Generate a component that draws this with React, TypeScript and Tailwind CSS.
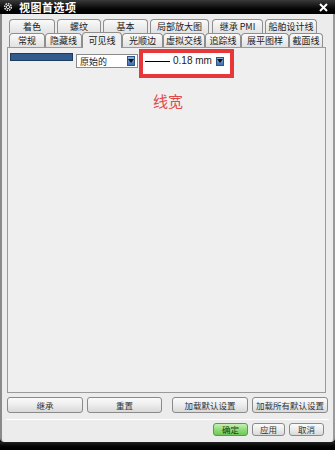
import React from "react";

const font = { fontFamily: '"Noto Sans CJK SC", "Liberation Sans", sans-serif' };

const row1 = [
  { t: "着色", w: 46 },
  { t: "螺纹", w: 44 },
  { t: "基本", w: 45 },
  { t: "局部放大图", w: 59 },
  { t: "继承 PMI", w: 51 },
  { t: "船舶设计线", w: 52 },
];
const row1Gaps = [0, 2, 2, 2, 3, 2];

const row2 = [
  { t: "常规", w: 36 },
  { t: "隐藏线", w: 37 },
  { t: "可见线", w: 40, sel: true },
  { t: "光顺边", w: 41 },
  { t: "虚拟交线", w: 42 },
  { t: "追踪线", w: 36 },
  { t: "展平图样", w: 48 },
  { t: "截面线", w: 34 },
];

function Btn({ children, w, h = 16, green = false }: { children: React.ReactNode; w: number; h?: number; green?: boolean }) {
  return (
    <div
      className={
        "flex items-center justify-center whitespace-nowrap rounded-[3px] border text-[8.5px] leading-none " +
        (green
          ? "border-[#5a9a4a] bg-gradient-to-b from-[#c8f0b8] via-[#8fdc78] to-[#6fc85a] text-[#1a3a10]"
          : "border-[#8a8a8a] bg-gradient-to-b from-[#fbfbfb] via-[#ececec] to-[#d9d9d9] text-[#333]")
      }
      style={{ width: w, height: h }}
    >
      {children}
    </div>
  );
}

export default function App() {
  return (
    <div className="w-[335px] h-[450px] flex flex-col bg-black overflow-hidden" style={font}>
      {/* Title bar */}
      <div className="h-[14px] flex items-center bg-gradient-to-b from-[#3a3a3a] via-[#111] to-[#000] px-[3px]">
        <svg width="10" height="10" viewBox="0 0 10 10" className="mr-[6px]">
          <circle cx="5" cy="5" r="3.3" fill="none" stroke="#ddd" strokeWidth="1.6" strokeDasharray="1.6 0.9" />
          <circle cx="5" cy="5" r="1.6" fill="none" stroke="#ddd" strokeWidth="1" />
        </svg>
        <span className="text-[11px] font-bold text-white leading-none tracking-[0.5px]">视图首选项</span>
        <div className="flex-1" />
        <svg width="9" height="9" viewBox="0 0 9 9" className="mr-[4px]">
          <path d="M1 1 L8 8 M8 1 L1 8" stroke="#fff" strokeWidth="2" />
        </svg>
      </div>

      {/* Body */}
      <div className="flex-1 flex flex-col bg-[#ececec] border-l-[2px] border-l-[#8a8a8a] border-r-[2px] border-r-[#9a9a9a] rounded-b-[4px]">
        {/* Tabs */}
        <div className="pt-[5px] pl-[7px] flex flex-col">
          <div className="flex h-[14px]">
            {row1.map((tab, i) => (
              <div
                key={tab.t}
                className="flex items-center justify-center whitespace-nowrap border border-b-0 border-[#8e8e8e] rounded-t-[4px] bg-gradient-to-b from-[#fafafa] to-[#e2e2e2] text-[9px] text-[#222] leading-none"
                style={{ width: tab.w, marginLeft: row1Gaps[i] }}
              >
                {tab.t}
              </div>
            ))}
          </div>
          <div className="flex h-[14px] items-end relative z-10">
            {row2.map((tab) => (
              <div
                key={tab.t}
                className={
                  "flex items-center justify-center whitespace-nowrap border border-[#8e8e8e] rounded-t-[4px] text-[9px] text-[#222] leading-none " +
                  (tab.sel
                    ? "h-[16px] border-b-0 bg-[#efefef] -mb-[1px]"
                    : "h-[14px] border-b-0 bg-gradient-to-b from-[#fafafa] to-[#e2e2e2]")
                }
                style={{ width: tab.w }}
              >
                {tab.t}
              </div>
            ))}
          </div>
        </div>

        {/* Panel */}
        <div className="ml-[5px] mr-[7px] h-[346px] border border-[#9a9a9a] bg-[#efefef] relative">
          <div className="flex items-start pt-[5px] pl-[2px]">
            <div className="w-[63px] h-[8px] bg-[#2f5b8e] border border-[#1e3a5c]" />
            <div className="ml-[3px] mt-[1px] w-[62px] h-[14px] bg-white border border-[#8a8a8a] flex items-center">
              <span className="text-[9px] text-[#222] leading-none pl-[3px] flex-1">原始的</span>
              <div className="w-[8px] h-[10px] mr-[2px] bg-gradient-to-b from-[#8fb3e0] to-[#3d6fb0] border border-[#2d558a] flex items-center justify-center">
                <svg width="6" height="4" viewBox="0 0 6 4"><path d="M0 0 L6 0 L3 4 Z" fill="#111" /></svg>
              </div>
            </div>
            <div className="ml-[1px] -mt-[4px] w-[95px] h-[29px] border-[4px] border-[#e8373a] bg-white flex flex-col">
              <div className="flex items-center h-[16px] pl-[2px]">
                <div className="w-[25px] h-[1px] bg-black" />
                <span className="text-[10px] text-[#222] leading-none ml-[3px]" style={{ fontFamily: '"Liberation Sans", sans-serif' }}>
                  0.18 mm
                </span>
                <div className="ml-[4px] w-[8px] h-[9px] bg-gradient-to-b from-[#8fb3e0] to-[#3d6fb0] border border-[#2d558a] flex items-center justify-center">
                  <svg width="6" height="4" viewBox="0 0 6 4"><path d="M0 0 L6 0 L3 4 Z" fill="#111" /></svg>
                </div>
              </div>
            </div>
          </div>
          <div className="pl-[145px] pt-[15px] text-[15px] text-[#e04a4a] leading-none">线宽</div>
        </div>

        {/* Button row */}
        <div className="flex pl-[5px] pt-[4px] gap-[4px]">
          <Btn w={76}>继承</Btn>
          <Btn w={75}>重置</Btn>
          <div className="w-[2px]" />
          <Btn w={76}>加载默认设置</Btn>
          <Btn w={76}>加载所有默认设置</Btn>
        </div>

        <div className="mt-[6px] mx-[4px] h-[1px] bg-[#d4d4d4] border-b border-b-white" />

        <div className="flex justify-end pr-[9px] pt-[3px] gap-[4px]">
          <Btn w={35} h={13} green>确定</Btn>
          <Btn w={33} h={13}>应用</Btn>
          <Btn w={35} h={13}>取消</Btn>
        </div>
      </div>
      <div className="h-[8px] bg-gradient-to-b from-[#222] to-black" />
    </div>
  );
}
